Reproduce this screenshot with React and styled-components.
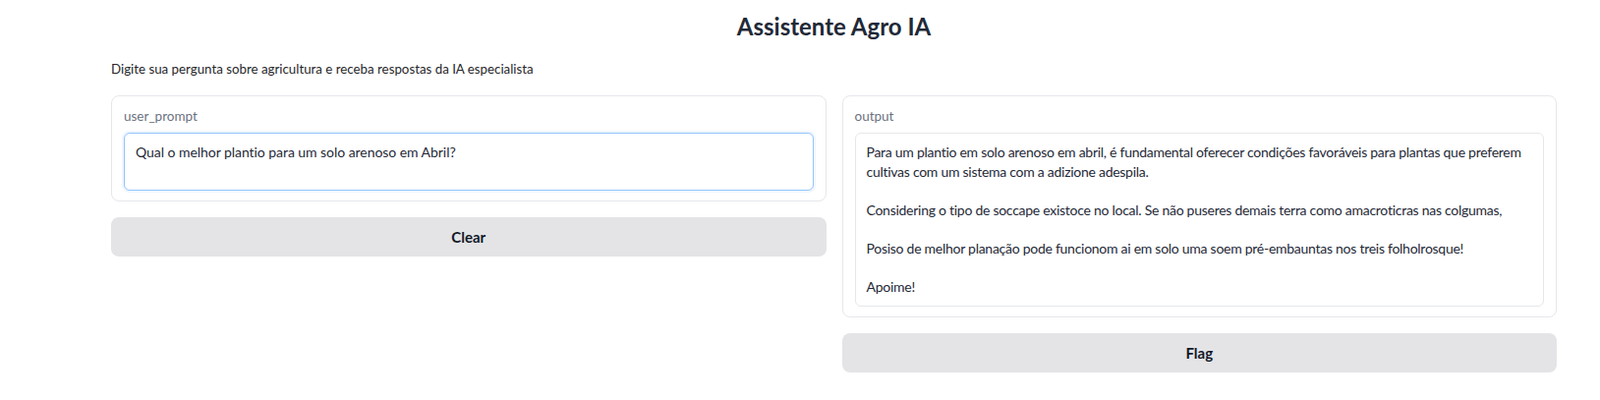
import React from "react";
import styled, { createGlobalStyle } from "styled-components";

const GlobalStyle = createGlobalStyle`
  html, body {
    margin: 0;
    padding: 0;
    background: #ffffff;
  }
  body {
    font-family: "Lato", "Noto Sans", sans-serif;
    color: #1f2937;
  }
  * {
    box-sizing: border-box;
  }
`;

const answer = `Para um plantio em solo arenoso em abril, é fundamental oferecer condições favoráveis para plantas que preferem cultivas com um sistema com a adizione adespila.

Considering o tipo de soccape existoce no local. Se não puseres demais terra como amacroticras nas colgumas,

Posiso de melhor planação pode funcionom ai em solo uma soem pré-embauntas nos treis folholrosque!

Apoime!`;

const App = () => {
  return (
    <>
      <GlobalStyle />
      <Page>
        <Title>Assistente Agro IA</Title>
        <Description>
          Digite sua pergunta sobre agricultura e receba respostas da IA especialista
        </Description>
        <Columns>
          <Column>
            <Block>
              <BlockLabel>user_prompt</BlockLabel>
              <InputArea
                rows={2}
                defaultValue="Qual o melhor plantio para um solo arenoso em Abril?"
              />
            </Block>
            <ActionButton>Clear</ActionButton>
          </Column>
          <Column>
            <Block>
              <BlockLabel>output</BlockLabel>
              <OutputBox>{answer}</OutputBox>
            </Block>
            <ActionButton>Flag</ActionButton>
          </Column>
        </Columns>
      </Page>
    </>
  );
};

export default App;

const Page = styled.div`
  margin: 0 44px 0 113px;
  padding-top: 10px;
`;

const Title = styled.h1`
  margin: 0;
  text-align: center;
  font-size: 24px;
  line-height: 34px;
  font-weight: 700;
  color: #1f2937;
`;

const Description = styled.p`
  margin: 17px 0 18px;
  font-size: 13.3px;
  line-height: 18px;
  color: #27272a;
`;

const Columns = styled.div`
  display: grid;
  grid-template-columns: 1fr 1fr;
  gap: 16px;
  align-items: start;
`;

const Column = styled.div`
  display: flex;
  flex-direction: column;
  gap: 16px;
`;

const Block = styled.div`
  border: 1px solid #e5e7eb;
  border-radius: 8px;
  padding: 10px 12px;
  background: #ffffff;
`;

const BlockLabel = styled.div`
  font-size: 13.5px;
  line-height: 20px;
  color: #6b7280;
  margin-bottom: 7px;
`;

const InputArea = styled.textarea`
  display: block;
  width: 100%;
  height: 59px;
  resize: none;
  font-family: inherit;
  font-size: 14px;
  letter-spacing: -0.05px;
  line-height: 1.4;
  color: #1f2937;
  padding: 9px 11px;
  border: 1px solid #93c5fd;
  border-radius: 6px;
  box-shadow: 0 0 0 2px #eff6ff;
  outline: none;
  background: #ffffff;
`;

const OutputBox = styled.div`
  font-size: 14px;
  letter-spacing: -0.27px;
  line-height: 1.4;
  white-space: pre-wrap;
  color: #1f2937;
  padding: 9px 10px 9px 11px;
  border: 1px solid #e5e7eb;
  border-radius: 6px;
  background: #ffffff;
`;

const ActionButton = styled.button`
  height: 40px;
  width: 100%;
  border: none;
  border-radius: 8px;
  background: #e4e4e7;
  color: #111827;
  font-family: inherit;
  font-size: 15px;
  font-weight: 700;
  cursor: pointer;
`;
